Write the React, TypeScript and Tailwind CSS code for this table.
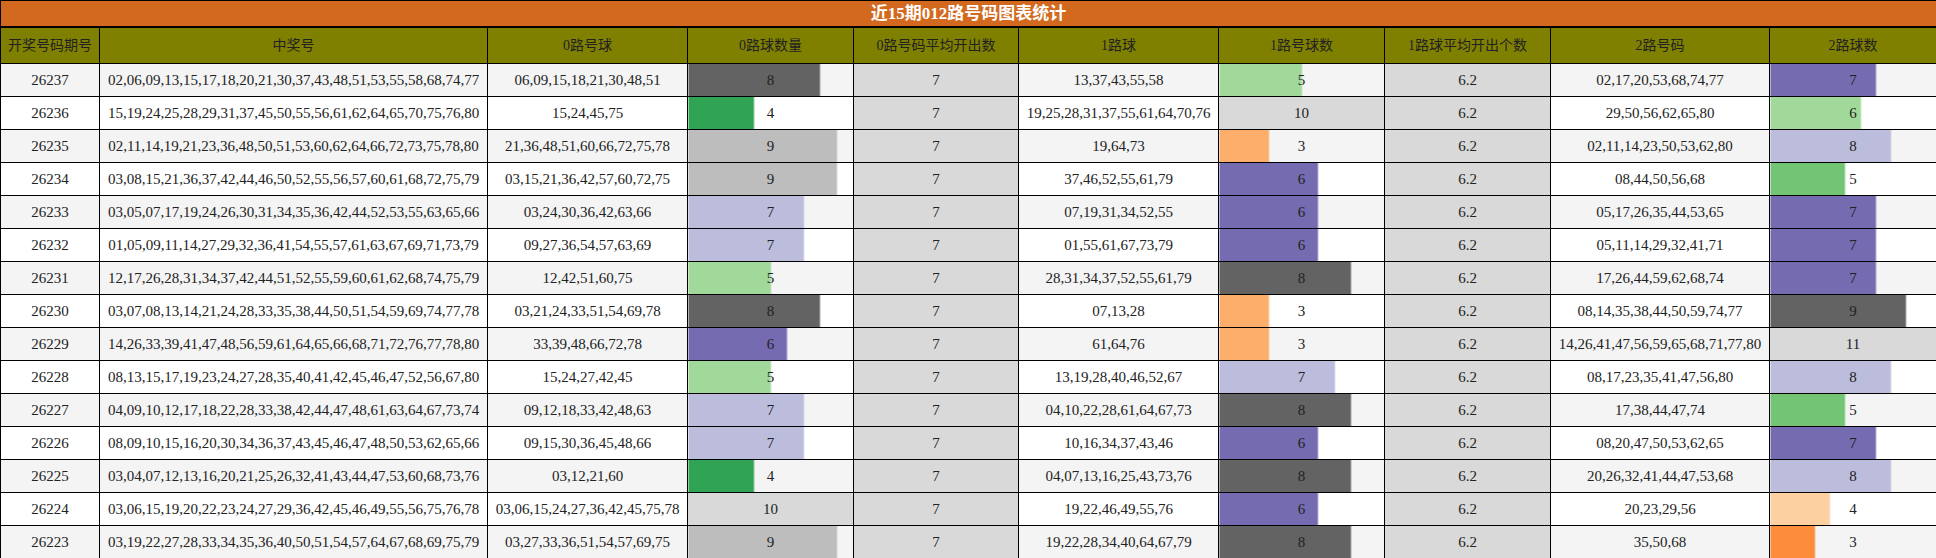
const draws: [string, string][] = [
  ['26237', '02,06,09,13,15,17,18,20,21,30,37,43,48,51,53,55,58,68,74,77'],
  ['26236', '15,19,24,25,28,29,31,37,45,50,55,56,61,62,64,65,70,75,76,80'],
  ['26235', '02,11,14,19,21,23,36,48,50,51,53,60,62,64,66,72,73,75,78,80'],
  ['26234', '03,08,15,21,36,37,42,44,46,50,52,55,56,57,60,61,68,72,75,79'],
  ['26233', '03,05,07,17,19,24,26,30,31,34,35,36,42,44,52,53,55,63,65,66'],
  ['26232', '01,05,09,11,14,27,29,32,36,41,54,55,57,61,63,67,69,71,73,79'],
  ['26231', '12,17,26,28,31,34,37,42,44,51,52,55,59,60,61,62,68,74,75,79'],
  ['26230', '03,07,08,13,14,21,24,28,33,35,38,44,50,51,54,59,69,74,77,78'],
  ['26229', '14,26,33,39,41,47,48,56,59,61,64,65,66,68,71,72,76,77,78,80'],
  ['26228', '08,13,15,17,19,23,24,27,28,35,40,41,42,45,46,47,52,56,67,80'],
  ['26227', '04,09,10,12,17,18,22,28,33,38,42,44,47,48,61,63,64,67,73,74'],
  ['26226', '08,09,10,15,16,20,30,34,36,37,43,45,46,47,48,50,53,62,65,66'],
  ['26225', '03,04,07,12,13,16,20,21,25,26,32,41,43,44,47,53,60,68,73,76'],
  ['26224', '03,06,15,19,20,22,23,24,27,29,36,42,45,46,49,55,56,75,76,78'],
  ['26223', '03,19,22,27,28,33,34,35,36,40,50,51,54,57,64,67,68,69,75,79'],
];

// bar colours as they appear per column (category20c shades)
const colors0: Record<number, string> = {
  4: '#31a354', 5: '#a1d99b', 6: '#756bb1', 7: '#bcbddc', 8: '#636363', 9: '#bdbdbd', 10: '#d9d9d9',
};
const colors1: Record<number, string> = {
  3: '#fdae6b', 5: '#a1d99b', 6: '#756bb1', 7: '#bcbddc', 8: '#636363', 10: '#d9d9d9',
};
const colors2: Record<number, string> = {
  3: '#fd8d3c', 4: '#fdd0a2', 5: '#74c476', 6: '#a1d99b', 7: '#756bb1', 8: '#bcbddc', 9: '#636363', 11: '#d9d9d9',
};

const rows = draws.map(([issue, nums]) => {
  const list = nums.split(',');
  const road = (r: number) => list.filter((n) => Number(n) % 3 === r);
  return { issue, nums, r0: road(0), r1: road(1), r2: road(2) };
});

const avg0 = rows.reduce((s, r) => s + r.r0.length, 0) / rows.length;
const avg1 = rows.reduce((s, r) => s + r.r1.length, 0) / rows.length;
const max0 = Math.max(...rows.map((r) => r.r0.length));
const max1 = Math.max(...rows.map((r) => r.r1.length));
const max2 = Math.max(...rows.map((r) => r.r2.length));

const headers = [
  '开奖号码期号', '中奖号', '0路号球', '0路球数量', '0路号码平均开出数',
  '1路球', '1路号球数', '1路球平均开出个数', '2路号码', '2路球数',
];
const widths = [99, 388, 200, 166, 165, 200, 166, 166, 219, 167];

function BarCell({ value, max, color }: { value: number | string; max: number; color: string }) {
  const pct = (Number(value) / max) * 100;
  // soft 1px edge at the end of the bar, like the chart's antialiased rect
  const bg =
    pct >= 100
      ? color
      : `linear-gradient(to right, ${color} calc(${pct}% - 1px), ${color}88 calc(${pct}% - 1px), ${color}88 ${pct}%, transparent ${pct}%)`;
  return (
    <td className="border border-black text-center align-middle p-0" style={{ background: bg }}>
      {value}
    </td>
  );
}

export default function App() {
  return (
    <div className="w-[1936px] bg-white font-['Liberation_Serif','Noto_Sans_CJK_SC',serif] text-[#222]">
      <table className="table-fixed border-collapse w-[1936px]">
        <colgroup>
          {widths.map((w, i) => (
            <col key={i} style={{ width: w }} />
          ))}
        </colgroup>
        <thead>
          <tr className="h-[26px]">
            <th
              colSpan={10}
              className="border border-black border-b-2 bg-[#d2691e] text-white text-[17px] font-bold leading-none p-0"
            >
              近15期012路号码图表统计
            </th>
          </tr>
          <tr className="h-[37px]">
            {headers.map((h) => (
              <th key={h} className="border border-black bg-[#808000] text-[14px] font-normal text-[#222] p-0">
                {h}
              </th>
            ))}
          </tr>
        </thead>
        <tbody className="text-[15px]">
          {rows.map((r, i) => (
            <tr key={r.issue} className={`h-[33px] ${i % 2 === 0 ? 'bg-[#f4f4f4]' : 'bg-white'}`}>
              <td className="border border-black text-center p-0">{r.issue}</td>
              <td className="border border-black text-center p-0 whitespace-nowrap">{r.nums}</td>
              <td className="border border-black text-center p-0 whitespace-nowrap">{r.r0.join(',')}</td>
              <BarCell value={r.r0.length} max={max0} color={colors0[r.r0.length]} />
              <BarCell value={Number(avg0.toFixed(1))} max={avg0} color="#d9d9d9" />
              <td className="border border-black text-center p-0 whitespace-nowrap">{r.r1.join(',')}</td>
              <BarCell value={r.r1.length} max={max1} color={colors1[r.r1.length]} />
              <BarCell value={Number(avg1.toFixed(1))} max={avg1} color="#d9d9d9" />
              <td className="border border-black text-center p-0 whitespace-nowrap">{r.r2.join(',')}</td>
              <BarCell value={r.r2.length} max={max2} color={colors2[r.r2.length]} />
            </tr>
          ))}
        </tbody>
      </table>
    </div>
  );
}
